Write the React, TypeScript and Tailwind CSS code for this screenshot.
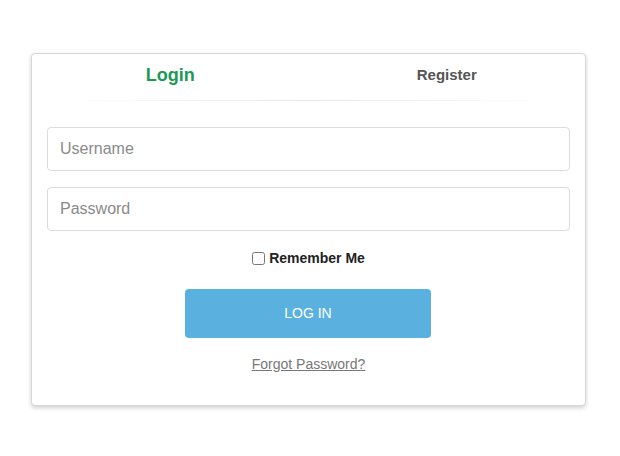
export default function App() {
  return (
    <div className="min-h-[456px] bg-white pt-[53px] font-['Liberation_Sans',Arial,sans-serif]">
      <div className="ml-[31px] w-[555px] rounded-[4px] border border-[#d6d6d6] bg-white pb-[32px] shadow-[0_2px_4px_rgba(0,0,0,0.18)]">
        {/* Tabs */}
        <div className="flex h-[46px]">
          <button className="flex-1 pb-[3px] text-[18px] font-bold text-[#1a9a56]">Login</button>
          <button className="flex-1 pb-[3px] text-[15px] font-bold text-[#555555]">Register</button>
        </div>
        <div className="mx-[24px] h-px bg-gradient-to-r from-transparent via-[#e6e6e6] to-transparent" />

        <div className="px-[15px] pt-[26px]">
          <input
            type="text"
            placeholder="Username"
            className="block h-[44px] w-full rounded-[4px] border border-[#dcdcdc] px-[12px] text-[16px] text-[#333] outline-none placeholder:text-[#8a8a8a]"
          />
          <input
            type="password"
            placeholder="Password"
            className="mt-[16px] block h-[44px] w-full rounded-[4px] border border-[#dcdcdc] px-[12px] text-[16px] text-[#333] outline-none placeholder:text-[#8a8a8a]"
          />

          <label className="mt-[18px] flex h-[18px] items-center justify-center gap-[4px] text-[14px] font-bold text-[#222]">
            <input type="checkbox" className="h-[13px] w-[13px]" />
            Remember Me
          </label>

          <div className="mt-[22px] flex justify-center pr-[1px]">
            <button className="h-[49px] w-[246px] rounded-[4px] bg-[#5ab1df] text-[14px] text-white">LOG IN</button>
          </div>

          <div className="mt-[17px] text-center leading-[18px]">
            <a href="#" className="text-[14px] text-[#777] underline">Forgot Password?</a>
          </div>
        </div>
      </div>
    </div>
  );
}
